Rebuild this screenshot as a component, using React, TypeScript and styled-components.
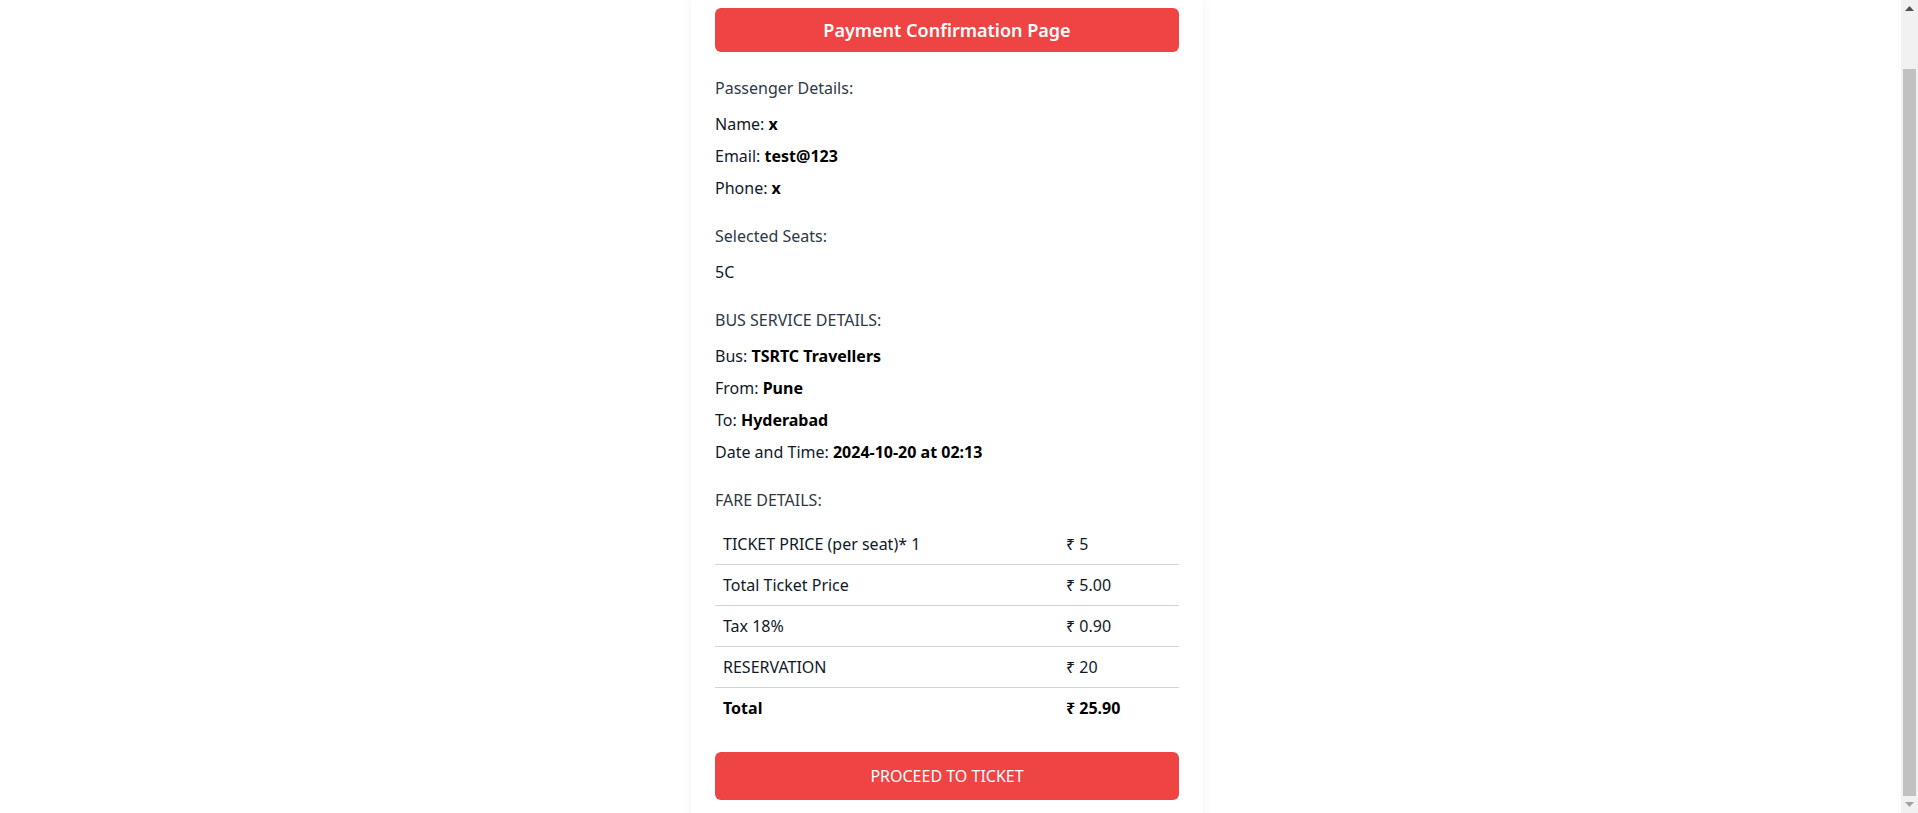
import React, { useLayoutEffect, useRef } from "react";
import styled, { createGlobalStyle } from "styled-components";

const GlobalStyle = createGlobalStyle`
  html, body {
    margin: 0;
    height: 100%;
    overflow: hidden;
  }
  body {
    background: #ffffff;
    font-family: "Noto Sans", "Open Sans", "DejaVu Sans", sans-serif;
    font-size: 16px;
    line-height: 24px;
    color: #111827;
  }
  #root { height: 100%; }
  * { box-sizing: border-box; }
`;

const Viewport = styled.div`
  display: flex;
  height: 100vh;
  width: 100vw;
`;

const ScrollArea = styled.div`
  flex: 1;
  min-width: 0;
  height: 100%;
  overflow: hidden;
`;

const Page = styled.div`
  display: flex;
  justify-content: center;
  padding: 40px 7px 0 0;
`;

const Card = styled.main`
  width: 512px;
  padding: 24px;
  background: #ffffff;
  border-radius: 8px;
  box-shadow: 0 10px 15px -3px rgba(0, 0, 0, 0.08), 0 4px 6px -4px rgba(0, 0, 0, 0.08);
`;

const Title = styled.h1`
  margin: 0 0 24px;
  padding: 8px 16px;
  background: #ef4444;
  color: #ffffff;
  border-radius: 6px;
  font-size: 18px;
  line-height: 28px;
  font-weight: 600;
  text-align: center;
`;

const Section = styled.section<{ $gap?: number }>`
  display: flex;
  flex-direction: column;
  margin-bottom: ${(p) => p.$gap ?? 16}px;
`;

const Heading = styled.h2`
  margin: 0 0 12px;
  font-size: 16px;
  line-height: 24px;
  font-weight: 400;
  color: #2f3744;
`;

const Line = styled.p`
  margin: 0 0 8px;
  font-size: 16px;
  line-height: 24px;
  color: #111827;
`;

const Value = styled.strong`
  font-weight: 700;
  color: #000000;
`;

const FareTable = styled.table`
  width: 100%;
  border-collapse: collapse;
  table-layout: fixed;
`;

const Row = styled.tr<{ $last?: boolean }>`
  border-bottom: ${(p) => (p.$last ? "none" : "1px solid #d1d5db")};
`;

const Cell = styled.td<{ $bold?: boolean; $label?: boolean }>`
  padding: 8px;
  width: ${(p) => (p.$label ? "343px" : "auto")};
  font-size: 16px;
  line-height: 24px;
  font-weight: ${(p) => (p.$bold ? 700 : 400)};
  color: ${(p) => (p.$bold ? "#000000" : "#111827")};
  text-align: left;
`;

const ProceedButton = styled.button`
  display: block;
  width: 100%;
  padding: 12px 16px;
  border: none;
  border-radius: 6px;
  background: #ef4444;
  color: #ffffff;
  font-family: inherit;
  font-size: 16px;
  line-height: 24px;
  text-transform: uppercase;
  cursor: pointer;
`;

/* Scrollbar rail drawn as part of the window frame */
const Rail = styled.div`
  width: 17px;
  flex: none;
  height: 100%;
  display: flex;
  flex-direction: column;
  background: #f1f1f1;
`;

const ArrowButton = styled.div`
  height: 17px;
  flex: none;
  display: flex;
  align-items: center;
  justify-content: center;
`;

const Track = styled.div<{ $offset: number }>`
  flex: 1;
  display: flex;
  flex-direction: column;
  padding: ${(p) => p.$offset}px 2px 0;
`;

const Thumb = styled.div`
  flex: 1;
  background: #c1c1c1;
`;

const fares = [
  { label: "TICKET PRICE (per seat)* 1", value: "₹ 5" },
  { label: "Total Ticket Price", value: "₹ 5.00" },
  { label: "Tax 18%", value: "₹ 0.90" },
  { label: "RESERVATION", value: "₹ 20" },
];

export default function App() {
  const areaRef = useRef<HTMLDivElement>(null);

  useLayoutEffect(() => {
    if (areaRef.current) areaRef.current.scrollTop = 56;
  }, []);

  return (
    <>
      <GlobalStyle />
      <Viewport>
        <ScrollArea ref={areaRef}>
          <Page>
            <Card>
              <Title>Payment Confirmation Page</Title>

              <Section>
                <Heading>Passenger Details:</Heading>
                <Line>
                  Name: <Value>x</Value>
                </Line>
                <Line>
                  Email: <Value>test@123</Value>
                </Line>
                <Line>
                  Phone: <Value>x</Value>
                </Line>
              </Section>

              <Section>
                <Heading>Selected Seats:</Heading>
                <Line>5C</Line>
              </Section>

              <Section>
                <Heading>BUS SERVICE DETAILS:</Heading>
                <Line>
                  Bus: <Value>TSRTC Travellers</Value>
                </Line>
                <Line>
                  From: <Value>Pune</Value>
                </Line>
                <Line>
                  To: <Value>Hyderabad</Value>
                </Line>
                <Line>
                  Date and Time: <Value>2024-10-20 at 02:13</Value>
                </Line>
              </Section>

              <Section $gap={24}>
                <Heading>FARE DETAILS:</Heading>
                <FareTable>
                  <tbody>
                    {fares.map((f) => (
                      <Row key={f.label}>
                        <Cell $label>{f.label}</Cell>
                        <Cell>{f.value}</Cell>
                      </Row>
                    ))}
                    <Row $last>
                      <Cell $label $bold>
                        Total
                      </Cell>
                      <Cell $bold>₹ 25.90</Cell>
                    </Row>
                  </tbody>
                </FareTable>
              </Section>

              <ProceedButton>Proceed to Ticket</ProceedButton>
            </Card>
          </Page>
        </ScrollArea>
        <Rail aria-hidden="true">
          <ArrowButton>
            <svg width="9" height="5" viewBox="0 0 9 5">
              <path d="M0 5 L4.5 0 L9 5 Z" fill="#505050" />
            </svg>
          </ArrowButton>
          <Track $offset={52}>
            <Thumb />
          </Track>
          <ArrowButton>
            <svg width="9" height="5" viewBox="0 0 9 5">
              <path d="M0 0 L4.5 5 L9 0 Z" fill="#a3a3a3" />
            </svg>
          </ArrowButton>
        </Rail>
      </Viewport>
    </>
  );
}
